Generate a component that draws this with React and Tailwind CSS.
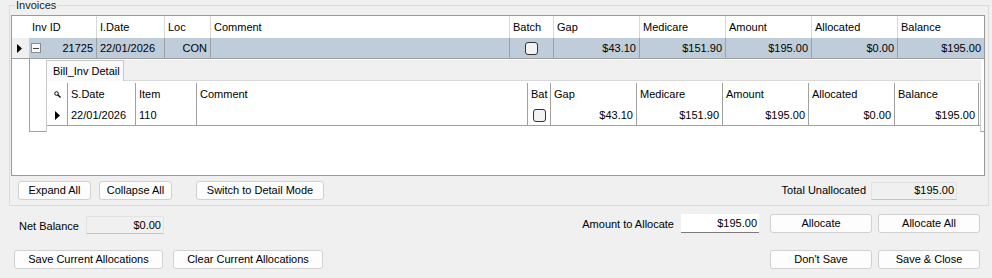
import React from 'react';

const mainCols = [
  { key: 'id', label: 'Inv ID', w: 'w-[68px]' },
  { key: 'date', label: 'I.Date', w: 'w-[68px]' },
  { key: 'loc', label: 'Loc', w: 'w-[46px]' },
  { key: 'comment', label: 'Comment', w: 'w-[299px]' },
  { key: 'batch', label: 'Batch', w: 'w-[44px]' },
  { key: 'gap', label: 'Gap', w: 'w-[86px]' },
  { key: 'medicare', label: 'Medicare', w: 'w-[86px]' },
  { key: 'amount', label: 'Amount', w: 'w-[86px]' },
  { key: 'allocated', label: 'Allocated', w: 'w-[86px]' },
  { key: 'balance', label: 'Balance', w: 'w-[86px]', last: true },
];

const detailCols = [
  { key: 'date', label: 'S.Date', w: 'w-[68px]' },
  { key: 'item', label: 'Item', w: 'w-[61px]' },
  { key: 'comment', label: 'Comment', w: 'w-[331px]' },
  { key: 'bat', label: 'Bat', w: 'w-[23px]' },
  { key: 'gap', label: 'Gap', w: 'w-[86px]' },
  { key: 'medicare', label: 'Medicare', w: 'w-[86px]' },
  { key: 'amount', label: 'Amount', w: 'w-[86px]' },
  { key: 'allocated', label: 'Allocated', w: 'w-[86px]' },
  { key: 'balance', label: 'Balance', w: 'w-[84px]' },
];

const invoice = {
  id: '21725',
  date: '22/01/2026',
  loc: 'CON',
  comment: '',
  gap: '$43.10',
  medicare: '$151.90',
  amount: '$195.00',
  allocated: '$0.00',
  balance: '$195.00',
};

const detail = {
  date: '22/01/2026',
  item: '110',
  comment: '',
  gap: '$43.10',
  medicare: '$151.90',
  amount: '$195.00',
  allocated: '$0.00',
  balance: '$195.00',
};

const RowArrow = () => (
  <svg width="5" height="9" viewBox="0 0 5 9">
    <polygon points="0,0 5,4.5 0,9" fill="#000" />
  </svg>
);

const CheckBox = () => (
  <span className="block w-[13px] h-[13px] rounded-[3px] border border-[#333] bg-[#f3f3f3]" />
);

const Button = ({ children, w }) => (
  <button className={`${w} h-[19px] bg-[#fdfdfd] border border-[#d0d0d0] rounded-[3px] text-[11px] leading-none text-black`}>
    {children}
  </button>
);

const renderMainCell = (col) => {
  if (col.key === 'id') {
    return (
      <div className="flex items-center h-full pl-[2px] pr-[3px]">
        <span className="w-[10px] h-[10px] border border-[#8c8c8c] bg-[#f7f7f7] flex items-center justify-center">
          <span className="w-[6px] h-px bg-[#444]" />
        </span>
        <span className="ml-auto">{invoice.id}</span>
      </div>
    );
  }
  if (col.key === 'batch') {
    return (
      <div className="flex items-center justify-center h-full">
        <CheckBox />
      </div>
    );
  }
  if (col.key === 'date' || col.key === 'comment') {
    return <div className="flex items-center h-full pl-[3px]">{invoice[col.key]}</div>;
  }
  return <div className="flex items-center justify-end h-full pr-[3px]">{invoice[col.key]}</div>;
};

const renderDetailCell = (col) => {
  if (col.key === 'bat') {
    return (
      <div className="flex items-center justify-center h-full">
        <CheckBox />
      </div>
    );
  }
  if (col.key === 'date' || col.key === 'item' || col.key === 'comment') {
    return <div className="flex items-center h-full pl-[3px]">{detail[col.key]}</div>;
  }
  return <div className="flex items-center justify-end h-full pr-[3px]">{detail[col.key]}</div>;
};

const DetailPanel = () => (
  <div className="w-[935px] h-[72px] flex flex-col">
    {/* tab strip */}
    <div className="flex h-[21px] bg-[#f0f0f0]">
      <div className="w-[78px] h-[21px] bg-[#fafafa] border-t border-l border-r border-[#c8c8c8] flex items-center pl-[6px]">
        Bill_Inv Detail
      </div>
      <div className="flex-1 border-b border-[#d9d9d9]" />
    </div>
    {/* tab page */}
    <div className="flex-1 bg-white border-l border-r border-[#c8c8c8] pt-[2px]">
      <div className="flex h-[22px]">
        <div className="w-[21px] border-r border-[#a0a0a0] flex items-center justify-center">
          <svg width="7" height="7" viewBox="0 0 7 7">
            <circle cx="2.5" cy="2.5" r="1.8" fill="none" stroke="#000" strokeWidth="1" />
            <line x1="3.8" y1="3.8" x2="6.5" y2="6.5" stroke="#000" strokeWidth="1.3" />
          </svg>
        </div>
        {detailCols.map((col) => (
          <div key={col.key} className={`${col.w} border-r border-[#a0a0a0] flex items-center pl-[3px]`}>
            {col.label}
          </div>
        ))}
      </div>
      <div className="flex h-[21px] border-b border-[#a0a0a0]">
        <div className="w-[21px] border-r border-[#a0a0a0] flex items-center justify-center">
          <RowArrow />
        </div>
        {detailCols.map((col) => (
          <div key={col.key} className={`${col.w} border-r border-[#a0a0a0]`}>
            {renderDetailCell(col)}
          </div>
        ))}
      </div>
    </div>
  </div>
);

const InvoiceGrid = () => (
  <div className="ml-[1px] mt-[4px] w-[974px] h-[161px] border border-[#999] bg-white">
    {/* header */}
    <div className="flex h-[22px]">
      <div className="w-[17px]" />
      {mainCols.map((col) => (
        <div
          key={col.key}
          className={`${col.w} flex items-center pl-[3px] ${col.last ? '' : 'border-r border-[#d9d9d9]'}`}
        >
          {col.label}
        </div>
      ))}
    </div>
    {/* selected invoice row */}
    <div className="flex h-[21px] border-b border-[#a0a0a0]">
      <div className="w-[17px] bg-[#f0f0f0] flex items-center pl-[5px]">
        <RowArrow />
      </div>
      {mainCols.map((col) => (
        <div
          key={col.key}
          className={`${col.w} bg-[#bfcddb] ${col.last ? '' : 'border-r border-[#a0a0a0]'}`}
        >
          {renderMainCell(col)}
        </div>
      ))}
    </div>
    {/* expanded child rows */}
    <div className="flex h-[73px]">
      <div className="w-[17px]" />
      <div className="flex-1 border-l border-b border-[#a0a0a0] pl-[16px] pt-[1px]">
        <DetailPanel />
      </div>
    </div>
  </div>
);

export default function App() {
  return (
    <div className="w-[992px] h-[278px] bg-[#f0f0f0] overflow-hidden text-[11px] text-black font-['Liberation_Sans',Arial,sans-serif]">
      <fieldset className="ml-[9px] w-[980px] h-[206px] border border-[#dcdcdc]">
        <legend className="ml-[5px] px-[1px] text-[11px] leading-[11px] text-[#222]">Invoices</legend>
        <InvoiceGrid />

        <div className="flex items-center mt-[5px] pl-[8px] pr-[31px]">
          <Button w="w-[73px]">Expand All</Button>
          <span className="ml-[8px]">
            <Button w="w-[73px]">Collapse All</Button>
          </span>
          <span className="ml-[24px]">
            <Button w="w-[128px]">Switch to Detail Mode</Button>
          </span>
          <span className="ml-auto mr-[5px]">Total Unallocated</span>
          <div className="w-[86px] h-[18px] bg-[#f0f0f0] border border-[#e3e3e3] border-b-[#c4c4c4] flex items-center justify-end pr-[2px]">
            $195.00
          </div>
        </div>
      </fieldset>

      <div className="flex items-start h-[20px] mt-[8px] pl-[19px] pr-[12px]">
        <span className="mt-[7px] leading-none">Net Balance</span>
        <div className="ml-[7px] mt-[2px] w-[78px] h-[18px] bg-[#f0f0f0] border border-[#e3e3e3] border-b-[#c4c4c4] flex items-center justify-end pr-[2px]">
          $0.00
        </div>
        <span className="ml-auto mt-[5px] leading-none">Amount to Allocate</span>
        <div className="ml-[7px] w-[78px] h-[19px] bg-white border-b border-[#7a7a7a] flex items-center justify-end pr-[2px]">
          $195.00
        </div>
        <span className="ml-[11px]">
          <Button w="w-[102px]">Allocate</Button>
        </span>
        <span className="ml-[6px]">
          <Button w="w-[102px]">Allocate All</Button>
        </span>
      </div>

      <div className="flex items-center h-[19px] mt-[16px] pl-[14px] pr-[12px]">
        <Button w="w-[149px]">Save Current Allocations</Button>
        <span className="ml-[10px]">
          <Button w="w-[150px]">Clear Current Allocations</Button>
        </span>
        <span className="ml-auto">
          <Button w="w-[102px]">Don't Save</Button>
        </span>
        <span className="ml-[6px]">
          <Button w="w-[102px]">Save &amp; Close</Button>
        </span>
      </div>
    </div>
  );
}
